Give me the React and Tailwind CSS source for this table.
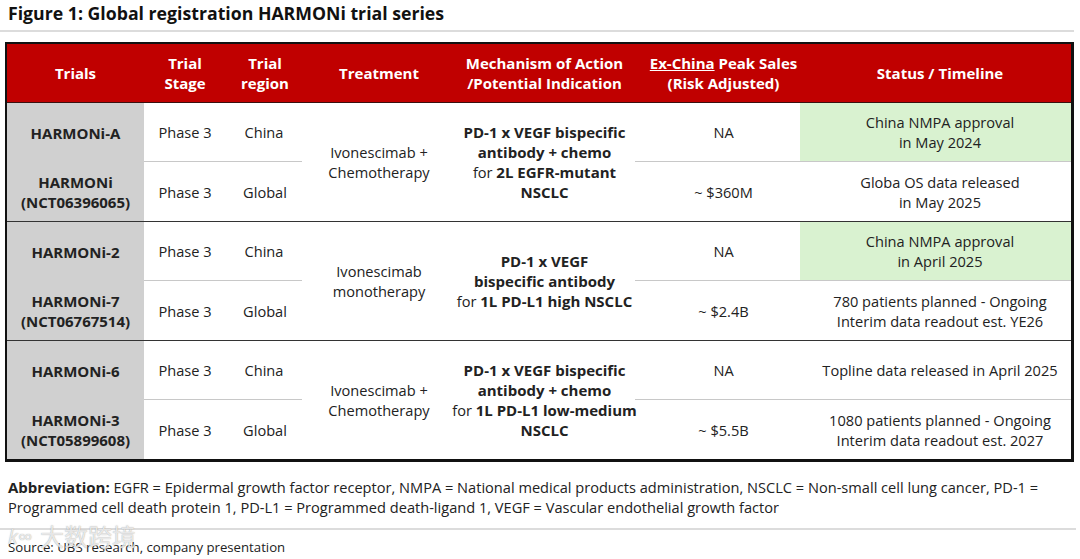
import React from "react";

const font = { fontFamily: '"Open Sans", "Noto Sans CJK SC", sans-serif' };

function Header() {
  return (
    <div className="grid grid-cols-[137px_82px_78px_150px_181px_165px_271px] h-[59px] bg-[#c00000] border-b border-[#3a1010] text-white font-bold text-[15px] leading-[20px] text-center">
      <div className="flex items-center justify-center">Trials</div>
      <div className="flex items-center justify-center">Trial<br />Stage</div>
      <div className="flex items-center justify-center">Trial<br />region</div>
      <div className="flex items-center justify-center">Treatment</div>
      <div className="flex items-center justify-center whitespace-nowrap">Mechanism of Action<br />/Potential Indication</div>
      <div className="flex items-center justify-center pl-[12px] whitespace-nowrap">
        <span><span className="underline">Ex-China</span> Peak Sales<br />(Risk Adjusted)</span>
      </div>
      <div className="flex items-center justify-center pl-[9px]">Status / Timeline</div>
    </div>
  );
}

function Group({ t1, t2, treatment, mech, sales1, sales2, status1, status2, green1, last }) {
  return (
    <div
      className={
        "grid grid-cols-[137px_82px_78px_150px_181px_165px_271px] grid-rows-[59px_59px] text-[14.6px] leading-[20px] text-center text-[#222] " +
        (last ? "" : "border-b border-[#333]")
      }
    >
      <div className="bg-[#d0d0d0] flex items-center justify-center font-bold text-[15px]">{t1}</div>
      <div className="flex items-center justify-center border-b border-[#c8c8c8]">Phase 3</div>
      <div className="flex items-center justify-center border-b border-[#c8c8c8] mr-[2px]">China</div>
      <div className="row-span-2 flex items-center justify-center">{treatment}</div>
      <div className="row-span-2 flex items-center justify-center whitespace-nowrap">{mech}</div>
      <div className="flex items-center justify-center pl-[12px] border-b border-[#c8c8c8]">{sales1}</div>
      <div className={"flex items-center justify-center pl-[9px] border-b border-[#c8c8c8] whitespace-nowrap " + (green1 ? "bg-[#d9f2d0]" : "")}>{status1}</div>
      <div className="bg-[#d0d0d0] flex items-center justify-center font-bold text-[15px]">{t2}</div>
      <div className="flex items-center justify-center">Phase 3</div>
      <div className="flex items-center justify-center">Global</div>
      <div className="flex items-center justify-center pl-[12px]">{sales2}</div>
      <div className="flex items-center justify-center pl-[9px] whitespace-nowrap">{status2}</div>
    </div>
  );
}

function B({ children }) {
  return <b className="text-[15px]">{children}</b>;
}

export default function App() {
  return (
    <div className="w-[1080px] h-[559px] bg-white relative overflow-hidden text-[#222]" style={font}>
      <div className="h-[30px] pl-[8px] pt-[1px] text-[17.7px] leading-[24px] font-bold text-[#111]">
        Figure 1: Global registration HARMONi trial series
      </div>
      <div className="h-[2px] w-[1074px] bg-[#dcdcdc]" />
      <div className="ml-[5px] mt-[10px] w-[1069px] border-l-2 border-t-2 border-r-[3px] border-b-[3px] border-[#111]">
        <Header />
        <Group
          t1="HARMONi-A"
          t2={<span>HARMONi<br />(NCT06396065)</span>}
          treatment={<span>Ivonescimab +<br />Chemotherapy</span>}
          mech={
            <span>
              <B>PD-1 x VEGF bispecific</B><br />
              <B>antibody + chemo</B><br />
              for <B>2L EGFR-mutant</B><br />
              <B>NSCLC</B>
            </span>
          }
          sales1="NA"
          sales2="~ $360M"
          status1={<span>China NMPA approval<br />in May 2024</span>}
          status2={<span>Globa OS data released<br />in May 2025</span>}
          green1
        />
        <Group
          t1="HARMONi-2"
          t2={<span>HARMONi-7<br />(NCT06767514)</span>}
          treatment={<span>Ivonescimab<br />monotherapy</span>}
          mech={
            <span>
              <B>PD-1 x VEGF</B><br />
              <B>bispecific antibody</B><br />
              for <B>1L PD-L1 high NSCLC</B>
            </span>
          }
          sales1="NA"
          sales2="~ $2.4B"
          status1={<span>China NMPA approval<br />in April 2025</span>}
          status2={<span>780 patients planned - Ongoing<br />Interim data readout est. YE26</span>}
          green1
        />
        <Group
          t1="HARMONi-6"
          t2={<span>HARMONi-3<br />(NCT05899608)</span>}
          treatment={<span>Ivonescimab +<br />Chemotherapy</span>}
          mech={
            <span>
              <B>PD-1 x VEGF bispecific</B><br />
              <B>antibody + chemo</B><br />
              for <B>1L PD-L1 low-medium</B><br />
              <B>NSCLC</B>
            </span>
          }
          sales1="NA"
          sales2="~ $5.5B"
          status1="Topline data released in April 2025"
          status2={<span>1080 patients planned - Ongoing<br />Interim data readout est. 2027</span>}
          last
        />
      </div>
      <div className="pl-[8px] pt-[15px] text-[14.6px] leading-[20px] text-[#222] whitespace-nowrap">
        <b className="text-[15px]">Abbreviation:</b> EGFR = Epidermal growth factor receptor, NMPA = National medical products administration, NSCLC = Non-small cell lung cancer, PD-1 =<br />
        Programmed cell death protein 1, PD-L1 = Programmed death-ligand 1, VEGF = Vascular endothelial growth factor
      </div>
      <div className="mt-[11px] h-[2px] w-[1076px] bg-[#dcdcdc]" />
      <div className="pl-[8px] pt-[8px] text-[13.2px] leading-[18px] text-[#222]">
        Source: UBS research, company presentation
      </div>
      <div
        className="absolute left-[8px] top-[523px] flex items-center gap-[8px] text-white/75 text-[24px] leading-[28px]"
        style={{ textShadow: "0 0 1px rgba(110,110,110,0.7)" }}
      >
        <span className="text-[20px] italic">k∞</span>
        <span>大数跨境</span>
      </div>
    </div>
  );
}
